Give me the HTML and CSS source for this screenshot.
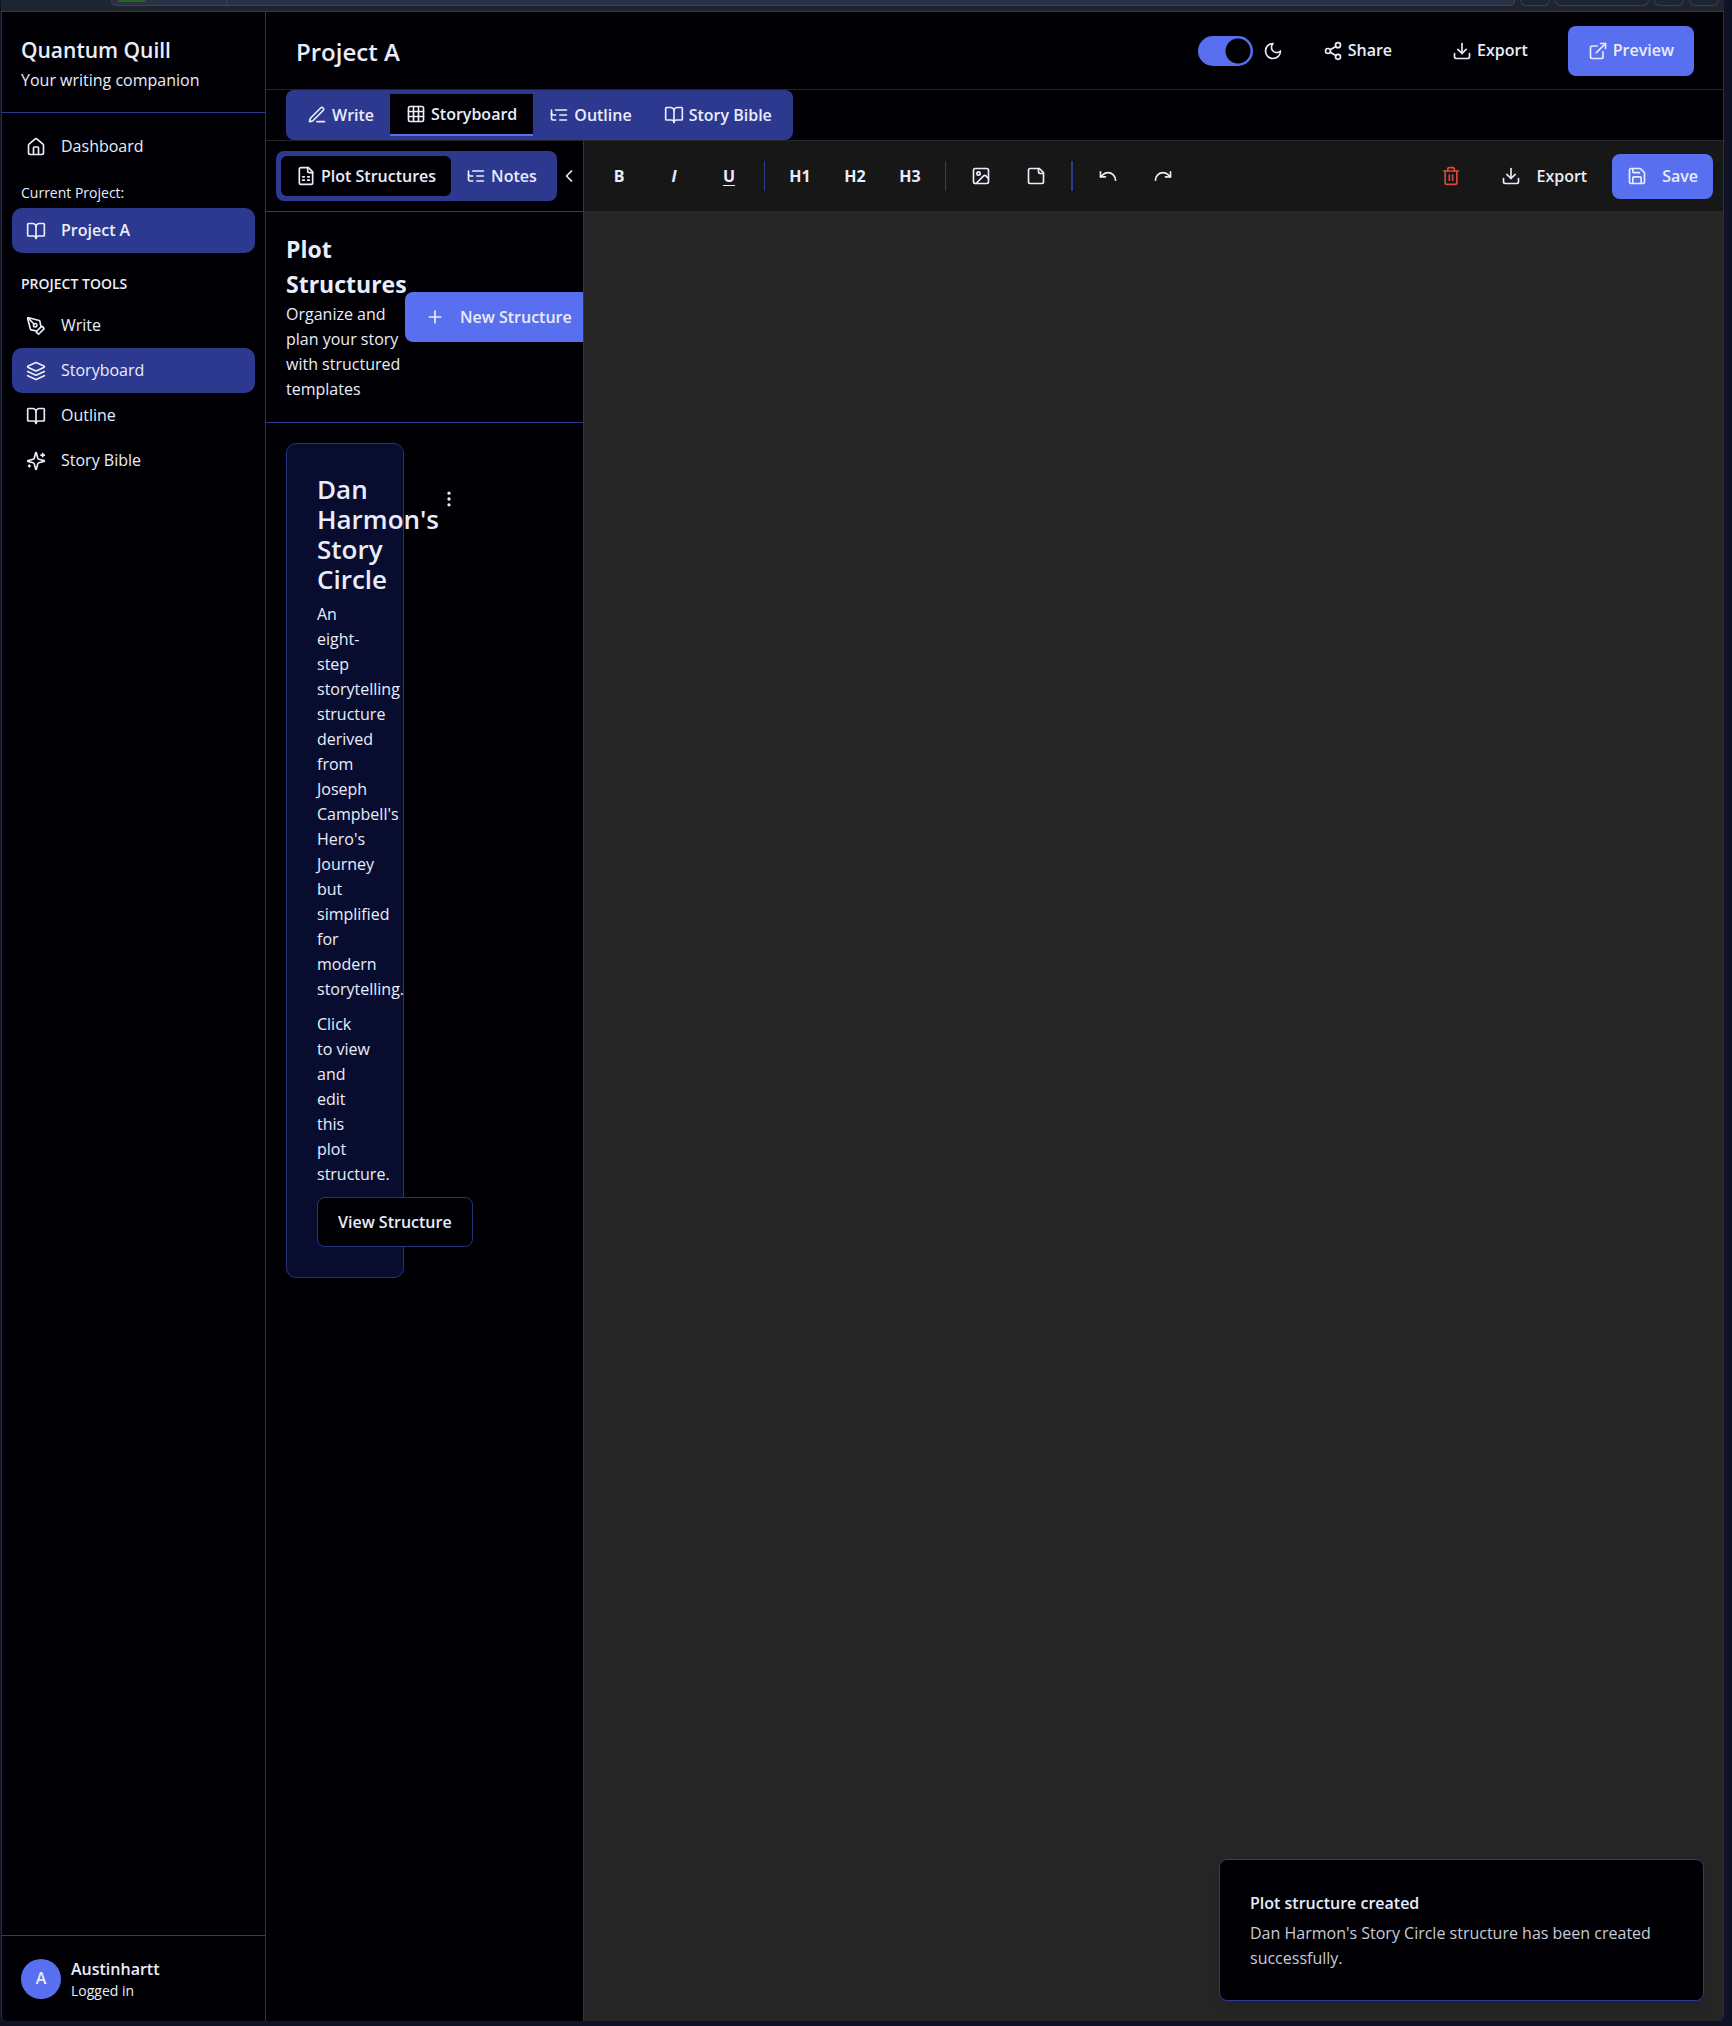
FILE: index.html
```html
<!DOCTYPE html>
<html lang="en">
<head>
<meta charset="utf-8">
<title>Quantum Quill – Project A</title>
<meta name="viewport" content="width=device-width, initial-scale=1">
<link rel="stylesheet" href="styles.css">
</head>
<body>
<svg class="sprite" aria-hidden="true">
  <symbol id="i-home" viewBox="0 0 24 24"><path d="M15 21v-8a1 1 0 0 0-1-1h-4a1 1 0 0 0-1 1v8"/><path d="M3 10a2 2 0 0 1 .709-1.528l7-5.999a2 2 0 0 1 2.582 0l7 5.999A2 2 0 0 1 21 10v9a2 2 0 0 1-2 2H5a2 2 0 0 1-2-2z"/></symbol>
  <symbol id="i-book" viewBox="0 0 24 24"><path d="M12 7v14"/><path d="M3 18a1 1 0 0 1-1-1V4a1 1 0 0 1 1-1h5a4 4 0 0 1 4 4 4 4 0 0 1 4-4h5a1 1 0 0 1 1 1v13a1 1 0 0 1-1 1h-6a3 3 0 0 0-3 3 3 3 0 0 0-3-3z"/></symbol>
  <symbol id="i-pentool" viewBox="0 0 24 24"><path d="M15.707 21.293a1 1 0 0 1-1.414 0l-1.586-1.586a1 1 0 0 1 0-1.414l5.586-5.586a1 1 0 0 1 1.414 0l1.586 1.586a1 1 0 0 1 0 1.414z"/><path d="m18 13-1.375-6.874a1 1 0 0 0-.746-.776L3.235 2.028a1 1 0 0 0-1.207 1.207L5.35 15.879a1 1 0 0 0 .776.746L13 18"/><path d="m2.3 2.3 7.286 7.286"/><circle cx="11" cy="11" r="2"/></symbol>
  <symbol id="i-layers" viewBox="0 0 24 24"><path d="m12.83 2.18a2 2 0 0 0-1.66 0L2.6 6.08a1 1 0 0 0 0 1.83l8.58 3.91a2 2 0 0 0 1.66 0l8.58-3.9a1 1 0 0 0 0-1.83Z"/><path d="m22 17.65-9.17 4.16a2 2 0 0 1-1.66 0L2 17.65"/><path d="m22 12.65-9.17 4.16a2 2 0 0 1-1.66 0L2 12.65"/></symbol>
  <symbol id="i-sparkles" viewBox="0 0 24 24"><path d="M9.937 15.5A2 2 0 0 0 8.5 14.063l-6.135-1.582a.5.5 0 0 1 0-.962L8.5 9.936A2 2 0 0 0 9.937 8.5l1.582-6.135a.5.5 0 0 1 .963 0L14.063 8.5A2 2 0 0 0 15.5 9.937l6.135 1.581a.5.5 0 0 1 0 .964L15.5 14.063a2 2 0 0 0-1.437 1.437l-1.582 6.135a.5.5 0 0 1-.963 0z"/><path d="M20 3v4"/><path d="M22 5h-4"/><path d="M4 17v2"/><path d="M5 18H3"/></symbol>
  <symbol id="i-penline" viewBox="0 0 24 24"><path d="M12 20h9"/><path d="M16.376 3.622a1 1 0 0 1 3.002 3.002L7.368 18.635a2 2 0 0 1-.855.506l-2.872.838a.5.5 0 0 1-.62-.62l.838-2.872a2 2 0 0 1 .506-.854z"/></symbol>
  <symbol id="i-grid" viewBox="0 0 24 24"><rect width="18" height="18" x="3" y="3" rx="2"/><path d="M3 9h18"/><path d="M3 15h18"/><path d="M9 3v18"/><path d="M15 3v18"/></symbol>
  <symbol id="i-tree" viewBox="0 0 24 24"><path d="M21 12h-8"/><path d="M21 6H8"/><path d="M21 18h-8"/><path d="M3 6v4c0 1.1.9 2 2 2h3"/><path d="M3 10v6c0 1.1.9 2 2 2h3"/></symbol>
  <symbol id="i-sheet" viewBox="0 0 24 24"><path d="M15 2H6a2 2 0 0 0-2 2v16a2 2 0 0 0 2 2h12a2 2 0 0 0 2-2V7Z"/><path d="M14 2v4a2 2 0 0 0 2 2h4"/><path d="M8 13h2"/><path d="M14 13h2"/><path d="M8 17h2"/><path d="M14 17h2"/></symbol>
  <symbol id="i-chevron" viewBox="0 0 24 24"><path d="m15 18-6-6 6-6"/></symbol>
  <symbol id="i-moon" viewBox="0 0 24 24"><path d="M12 3a6 6 0 0 0 9 9 9 9 0 1 1-9-9Z"/></symbol>
  <symbol id="i-share" viewBox="0 0 24 24"><circle cx="18" cy="5" r="3"/><circle cx="6" cy="12" r="3"/><circle cx="18" cy="19" r="3"/><path d="m8.59 13.51 6.83 3.98"/><path d="m15.41 6.51-6.82 3.98"/></symbol>
  <symbol id="i-download" viewBox="0 0 24 24"><path d="M21 15v4a2 2 0 0 1-2 2H5a2 2 0 0 1-2-2v-4"/><path d="m7 10 5 5 5-5"/><path d="M12 15V3"/></symbol>
  <symbol id="i-external" viewBox="0 0 24 24"><path d="M15 3h6v6"/><path d="M10 14 21 3"/><path d="M18 13v6a2 2 0 0 1-2 2H5a2 2 0 0 1-2-2V8a2 2 0 0 1 2-2h6"/></symbol>
  <symbol id="i-image" viewBox="0 0 24 24"><rect width="18" height="18" x="3" y="3" rx="2"/><circle cx="9" cy="9" r="2"/><path d="m21 15-3.086-3.086a2 2 0 0 0-2.828 0L6 21"/></symbol>
  <symbol id="i-note" viewBox="0 0 24 24"><path d="M16 3H5a2 2 0 0 0-2 2v14a2 2 0 0 0 2 2h14a2 2 0 0 0 2-2V8Z"/><path d="M15 3v4a2 2 0 0 0 2 2h4"/></symbol>
  <symbol id="i-undo" viewBox="0 0 24 24"><path d="M3 7v6h6"/><path d="M21 17a9 9 0 0 0-9-9 9 9 0 0 0-6 2.3L3 13"/></symbol>
  <symbol id="i-redo" viewBox="0 0 24 24"><path d="M21 7v6h-6"/><path d="M3 17a9 9 0 0 1 9-9 9 9 0 0 1 6 2.3l3 2.7"/></symbol>
  <symbol id="i-trash" viewBox="0 0 24 24"><path d="M3 6h18"/><path d="M19 6v14a2 2 0 0 1-2 2H7a2 2 0 0 1-2-2V6"/><path d="M8 6V4a2 2 0 0 1 2-2h4a2 2 0 0 1 2 2v2"/><path d="M10 11v6"/><path d="M14 11v6"/></symbol>
  <symbol id="i-save" viewBox="0 0 24 24"><path d="M15.2 3a2 2 0 0 1 1.4.6l3.8 3.8a2 2 0 0 1 .6 1.4V19a2 2 0 0 1-2 2H5a2 2 0 0 1-2-2V5a2 2 0 0 1 2-2z"/><path d="M17 21v-7a1 1 0 0 0-1-1H8a1 1 0 0 0-1 1v7"/><path d="M7 3v4a1 1 0 0 0 1 1h7"/></symbol>
  <symbol id="i-plus" viewBox="0 0 24 24"><path d="M5 12h14"/><path d="M12 5v14"/></symbol>
  <symbol id="i-dots" viewBox="0 0 24 24"><circle cx="12" cy="12" r="1"/><circle cx="12" cy="5" r="1"/><circle cx="12" cy="19" r="1"/></symbol>
</svg>

<div class="chrome" aria-hidden="true">
  <div class="chrome-address"><span class="chrome-badge"></span></div>
  <div class="chrome-box"></div>
  <div class="chrome-box chrome-box-wide"></div>
  <div class="chrome-box"></div>
  <div class="chrome-box"></div>
</div>

<div class="app">
  <aside class="sidebar">
    <div class="brand">
      <h1>Quantum Quill</h1>
      <p>Your writing companion</p>
    </div>
    <nav class="nav" aria-label="Main">
      <a class="nav-item" href="#"><svg class="icon"><use href="#i-home"/></svg>Dashboard</a>
      <p class="nav-label">Current Project:</p>
      <a class="nav-item active strong" href="#"><svg class="icon"><use href="#i-book"/></svg>Project A</a>
      <h2 class="nav-heading">PROJECT TOOLS</h2>
      <a class="nav-item" href="#"><svg class="icon"><use href="#i-pentool"/></svg>Write</a>
      <a class="nav-item active" href="#"><svg class="icon"><use href="#i-layers"/></svg>Storyboard</a>
      <a class="nav-item" href="#"><svg class="icon"><use href="#i-book"/></svg>Outline</a>
      <a class="nav-item" href="#"><svg class="icon"><use href="#i-sparkles"/></svg>Story Bible</a>
    </nav>
    <div class="user">
      <span class="avatar">A</span>
      <div>
        <p class="user-name">Austinhartt</p>
        <p class="user-state">Logged in</p>
      </div>
    </div>
  </aside>

  <main class="main">
    <header class="header">
      <h2>Project A</h2>
      <div class="header-actions">
        <div class="theme">
          <input class="switch" type="checkbox" role="switch" aria-label="Dark mode" checked>
          <svg class="icon"><use href="#i-moon"/></svg>
        </div>
        <button class="btn" type="button"><svg class="icon"><use href="#i-share"/></svg>Share</button>
        <button class="btn" type="button"><svg class="icon"><use href="#i-download"/></svg>Export</button>
        <button class="btn primary" type="button"><svg class="icon"><use href="#i-external"/></svg>Preview</button>
      </div>
    </header>

    <div class="tab-row">
      <div class="tabs" role="tablist">
        <button class="tab" type="button" role="tab"><svg class="icon"><use href="#i-penline"/></svg>Write</button>
        <button class="tab underlined" type="button" role="tab" aria-selected="true"><svg class="icon"><use href="#i-grid"/></svg>Storyboard</button>
        <button class="tab" type="button" role="tab"><svg class="icon"><use href="#i-tree"/></svg>Outline</button>
        <button class="tab" type="button" role="tab"><svg class="icon"><use href="#i-book"/></svg>Story Bible</button>
      </div>
    </div>

    <div class="workspace">
      <section class="panel">
        <div class="panel-bar">
          <div class="tabs" role="tablist">
            <button class="tab selected" type="button" role="tab" aria-selected="true"><svg class="icon"><use href="#i-sheet"/></svg>Plot Structures</button>
            <button class="tab" type="button" role="tab"><svg class="icon"><use href="#i-tree"/></svg>Notes</button>
          </div>
          <button class="collapse" type="button" aria-label="Collapse panel"><svg class="icon"><use href="#i-chevron"/></svg></button>
        </div>
        <div class="panel-head">
          <div class="panel-intro">
            <h3>Plot Structures</h3>
            <p>Organize and plan your story with structured templates</p>
          </div>
          <button class="btn primary new" type="button"><svg class="icon"><use href="#i-plus"/></svg>New Structure</button>
        </div>
        <div class="panel-body">
          <article class="card">
            <div class="card-head">
              <h4>Dan Harmon's Story Circle</h4>
              <button class="more" type="button" aria-label="More options"><svg class="icon"><use href="#i-dots"/></svg></button>
            </div>
            <p>An eight-<wbr>step storytelling structure derived from Joseph Campbell's Hero's Journey but simplified for modern storytelling.</p>
            <p>Click<br>to view<br>and edit this plot structure.</p>
            <button class="btn outline" type="button">View Structure</button>
          </article>
        </div>
      </section>

      <section class="editor">
        <div class="toolbar">
          <button class="tool" type="button">B</button>
          <button class="tool italic" type="button">I</button>
          <button class="tool underline" type="button">U</button>
          <span class="rule"></span>
          <button class="tool" type="button">H1</button>
          <button class="tool" type="button">H2</button>
          <button class="tool" type="button">H3</button>
          <span class="rule"></span>
          <button class="tool" type="button" aria-label="Insert image"><svg class="icon"><use href="#i-image"/></svg></button>
          <button class="tool" type="button" aria-label="Insert note"><svg class="icon"><use href="#i-note"/></svg></button>
          <span class="rule thick"></span>
          <button class="tool" type="button" aria-label="Undo"><svg class="icon"><use href="#i-undo"/></svg></button>
          <button class="tool" type="button" aria-label="Redo"><svg class="icon"><use href="#i-redo"/></svg></button>
          <div class="toolbar-end">
            <button class="tool danger" type="button" aria-label="Delete"><svg class="icon"><use href="#i-trash"/></svg></button>
            <button class="btn small" type="button"><svg class="icon"><use href="#i-download"/></svg>Export</button>
            <button class="btn small primary" type="button"><svg class="icon"><use href="#i-save"/></svg>Save</button>
          </div>
        </div>
        <div class="canvas"></div>
      </section>
    </div>
  </main>

  <div class="toast" role="status">
    <p class="toast-title">Plot structure created</p>
    <p>Dan Harmon's Story Circle structure has been created successfully.</p>
  </div>
</div>
</body>
</html>
```
FILE: styles.css
```css
:root {
  --bg: #000004;
  --text: #e9edfb;
  --accent: #5870ef;
  --muted: #2d388f;
  --line: #27327f;
  --grey-line: #262628;
}

* { box-sizing: border-box; margin: 0; }

body {
  display: flex;
  flex-direction: column;
  min-height: 100vh;
  padding: 0 8px 5px 1px;
  background: #101325;
  color: var(--text);
  font: 16px/25px "Open Sans", "Noto Sans", sans-serif;
}

button {
  border: 0;
  padding: 0;
  background: none;
  color: inherit;
  font: inherit;
  font-weight: 600;
  white-space: nowrap;
  cursor: pointer;
}

a { color: inherit; text-decoration: none; }

.sprite { position: absolute; width: 0; height: 0; }

.icon {
  flex: none;
  width: 20px;
  height: 20px;
  fill: none;
  stroke: currentColor;
  stroke-width: 2;
  stroke-linecap: round;
  stroke-linejoin: round;
}

/* Browser edge above the app */
.chrome {
  display: flex;
  align-items: flex-start;
  gap: 5px;
  height: 12px;
  padding: 0 5px 0 110px;
  background: #1e2430;
  border-bottom: 1px solid #343848;
}
.chrome-address {
  flex: 1;
  height: 6px;
  padding-left: 6px;
  background: linear-gradient(90deg, transparent 114px, #3d4155 114px, #3d4155 115px, transparent 115px) #2c3044;
  border: 1px solid #3d4155;
  border-top: 0;
  border-radius: 0 0 5px 5px;
}
.chrome-badge {
  display: block;
  width: 28px;
  height: 2px;
  background: #25661f;
  border-radius: 0 0 3px 3px;
}
.chrome-box {
  width: 30px;
  height: 6px;
  border: 1px solid #3a3e50;
  border-top: 0;
  border-radius: 0 0 6px 6px;
}
.chrome-box-wide { width: 94px; }

.app {
  position: relative;
  flex: 1;
  display: flex;
  background: var(--bg);
  border: 1px solid #2e3042;
  border-width: 0 1px 0 1px;
  border-radius: 0 0 5px 5px;
  overflow: hidden;
}

/* Sidebar */
.sidebar {
  flex: none;
  display: flex;
  flex-direction: column;
  width: 264px;
  border-right: 1px solid var(--line);
}
.brand {
  padding: 20px 19px 19px;
  border-bottom: 1px solid var(--muted);
}
.brand h1 { font-size: 21px; line-height: 36px; font-weight: 600; }
.nav {
  flex: 1;
  display: flex;
  flex-direction: column;
  padding: 11px 10px;
}
.nav-item {
  display: flex;
  align-items: center;
  gap: 15px;
  height: 45px;
  padding: 0 14px;
  border-radius: 10px;
}
.nav-item.active { background: var(--muted); }
.nav-item.strong { font-weight: 600; }
.nav-label { padding: 11px 9px 3px; font-size: 14px; }
.nav-heading { padding: 18px 9px 7px; font-size: 14px; font-weight: 600; }
.user {
  display: flex;
  align-items: center;
  gap: 10px;
  height: 86px;
  padding: 0 19px;
  border-top: 1px solid var(--muted);
}
.avatar {
  display: grid;
  place-items: center;
  width: 40px;
  height: 40px;
  border-radius: 50%;
  background: var(--accent);
  font-weight: 600;
}
.user-name { padding-top: 2px; font-weight: 600; line-height: 22px; }
.user-state { font-size: 14px; line-height: 22px; }

/* Header */
.main { flex: 1; min-width: 0; display: flex; flex-direction: column; }
.header {
  display: flex;
  align-items: center;
  justify-content: space-between;
  height: 78px;
  padding: 0 29px 0 30px;
  border-bottom: 1px solid var(--grey-line);
}
.header h2 { padding-top: 2px; font-size: 24px; line-height: 35px; font-weight: 600; }
.header-actions { display: flex; align-items: center; gap: 20px; }
.theme { display: flex; align-items: center; gap: 10px; }
.switch {
  appearance: none;
  width: 55px;
  height: 30px;
  margin: 0;
  border-radius: 15px;
  background: radial-gradient(circle at 40px 15px, var(--bg) 12px, transparent 13px) var(--accent);
}
.btn {
  display: flex;
  align-items: center;
  justify-content: center;
  gap: 5px;
  height: 50px;
  padding: 0 20px;
  border-radius: 8px;
}
.btn.primary { background: var(--accent); }
.btn.small { height: 45px; padding: 0 15px; gap: 15px; }

/* Tabs */
.tab-row {
  display: flex;
  height: 51px;
  padding: 0 20px;
  border-bottom: 1px solid var(--grey-line);
}
.tabs {
  display: flex;
  align-items: center;
  height: 50px;
  padding: 0 5px;
  border-radius: 8px;
  background: var(--muted);
}
.tab {
  display: flex;
  align-items: center;
  gap: 5px;
  height: 40px;
  padding: 0 15px;
  border-radius: 6px;
}
.tab-row .tab { padding: 0 16px; }
.tab.selected { background: var(--bg); }
.tab.underlined {
  height: 42px;
  background: var(--bg);
  border-bottom: 2px solid var(--accent);
  border-radius: 0;
}

/* Storyboard panel */
.workspace { flex: 1; display: flex; }
.panel {
  flex: none;
  width: 318px;
  border-right: 1px solid var(--line);
  overflow: hidden;
}
.panel-bar {
  display: flex;
  align-items: center;
  gap: 2px;
  height: 71px;
  padding-left: 10px;
  border-bottom: 1px solid var(--muted);
}
.collapse { display: flex; }
.panel-head {
  display: flex;
  align-items: center;
  padding: 20px;
  border-bottom: 1px solid var(--muted);
}
.panel-intro { flex: none; width: 119px; }
.panel-intro h3 { font-size: 23px; line-height: 35px; font-weight: 700; }
.btn.new { flex: none; gap: 15px; }
.panel-body { padding: 20px; }
.card {
  display: flex;
  flex-direction: column;
  gap: 10px;
  width: 118px;
  padding: 30px;
  background: #080d30;
  border: 1px solid var(--line);
  border-radius: 10px;
}
.card-head { display: flex; align-items: flex-start; width: 142px; height: 118px; }
.card-head h4 {
  flex: none;
  width: 122px;
  font-size: 26px;
  line-height: 30px;
  font-weight: 600;
}
.more { display: grid; place-items: center; height: 50px; }
.btn.outline {
  align-self: flex-start;
  background: var(--bg);
  border: 1px solid var(--line);
}

/* Editor */
.editor { flex: 1; min-width: 0; display: flex; flex-direction: column; }
.toolbar {
  display: flex;
  align-items: center;
  gap: 5px;
  height: 70px;
  padding: 0 10px;
  background: #171717;
}
.tool {
  display: grid;
  place-items: center;
  width: 50px;
  height: 45px;
  font-weight: 700;
}
.tool.italic { font-style: italic; }
.tool.underline { text-decoration: underline; text-underline-offset: 3px; }
.tool.danger { color: #d64a3c; }
.rule { width: 1px; height: 30px; margin: 0 5px; background: var(--muted); }
.rule.thick { width: 2px; }
.toolbar-end { display: flex; align-items: center; gap: 10px; margin-left: auto; }
.canvas { flex: 1; background: #262626; }

/* Notification */
.toast {
  position: absolute;
  right: 19px;
  bottom: 20px;
  width: 485px;
  padding: 31px 30px 29px;
  background: var(--bg);
  border: 1px solid var(--muted);
  border-radius: 8px;
  box-shadow: 0 10px 15px #00000020;
  color: #c8cbd6;
}
.toast-title { margin-bottom: 5px; color: var(--text); font-weight: 600; }
```
